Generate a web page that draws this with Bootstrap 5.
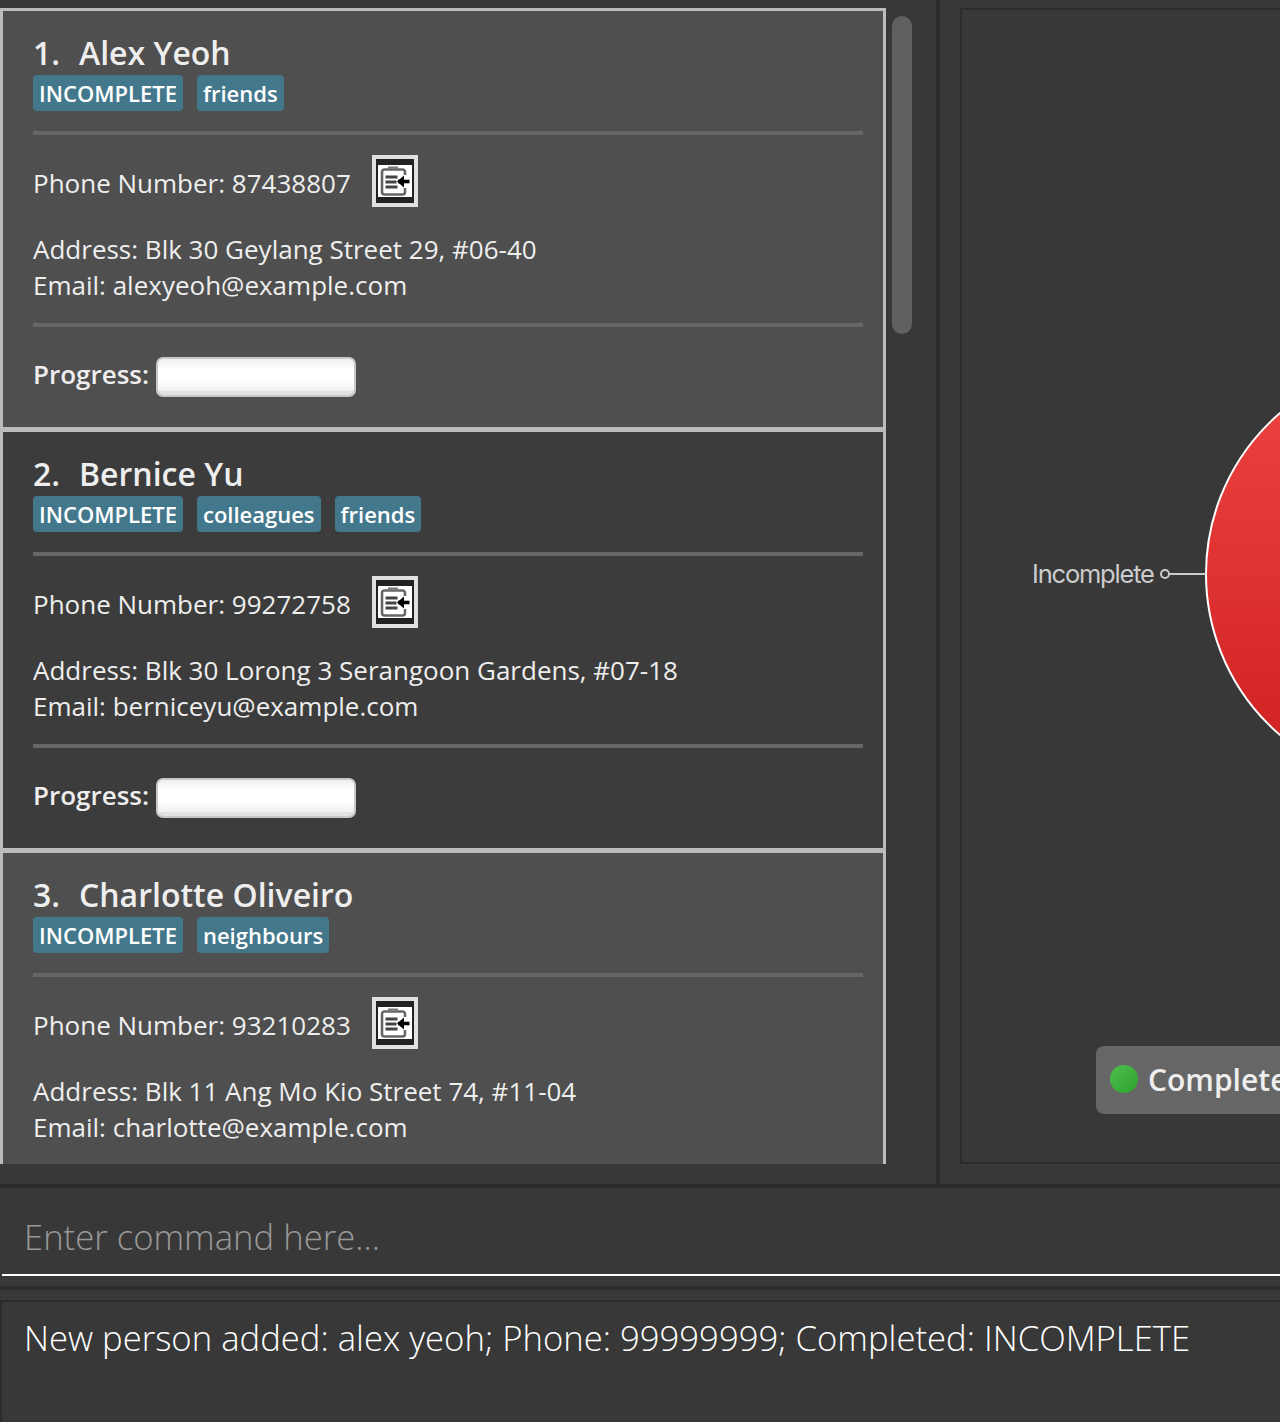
<!DOCTYPE html>
<html lang="en">
<head>
<meta charset="utf-8">
<title>Address book</title>
<link href="https://cdn.jsdelivr.net/npm/bootstrap@5.3.0/dist/css/bootstrap.min.css" rel="stylesheet">
<style>
html,body{margin:0;height:1422px;overflow:hidden;background:#383838;font-family:"Open Sans","Liberation Sans",sans-serif;}
.app-root{width:1280px;height:1422px;overflow:hidden;}
.top-row{height:1184px;flex:none;}
.left-pane{width:936px;height:1184px;padding-top:8px;}
.person-list{width:886px;height:1156px;overflow:hidden;}
.person-card{height:421px;border-style:solid;border-color:#bcbcbc;border-width:3px 3px 2px 3px;border-radius:0;padding:22px 20px 0 30px;color:#eee;font-size:26px;line-height:36px;}
.person-odd{background:#4f4f4f;}
.person-even{background:#3c3c3c;}
.person-name{font-size:32px;font-weight:600;line-height:40px;margin:0;color:#eee;}
.person-idx{display:inline-block;width:46px;}
.tag-row{gap:14px;margin-top:2px;}
.tag-chip{background:#43788c;color:#fff;height:36px;line-height:36px;font-size:22px;font-weight:600;padding:0 6px;border-radius:4px;}
.rule-line{height:4px;background:#666;margin:20px 0 0 0;}
.phone-row{margin-top:20px;height:52px;}
.phone-row span{margin-top:3px;}
.copy-btn{width:46px;height:52px;border:4px solid #e0e0e0;background:#222;margin-left:21px;padding:2px;}
.copy-btn svg{display:block;width:34px;height:32px;background:#fff;margin-top:4px;}
.addr-block{margin-top:24px;}
.rule-two{margin-top:20px;}
.progress-row{margin-top:30px;height:40px;font-weight:600;}
.progress-row span{margin-top:-6px;}
.empty-bar{width:200px;height:40px;margin-left:7px;border:2px solid #c8c8c8;border-radius:7px;background:linear-gradient(#f0f0f0,#fff 30%,#fff 60%,#f0f0f0 88%,#e2e2e2 90%);}
.scroll-track{width:20px;margin-left:6px;padding-top:8px;}
.scroll-thumb{width:20px;height:318px;background:#606060;border-radius:10px;}
.v-split{width:4px;background:#2c2c2c;}
.right-pane{flex:1;padding:8px 0 20px 20px;min-width:0;}
.chart-box{position:relative;height:1156px;width:500px;border:2px solid #2c2c2c;}
.pie-svg{position:absolute;left:-2px;top:-2px;width:500px;height:1156px;}
.pie-label{font-family:Inter,"Liberation Sans",sans-serif;font-size:25.500px;letter-spacing:-1.2px;fill:#ccc;}
.legend-chip{position:absolute;left:134px;top:1036px;width:300px;height:68px;background:#666;border-radius:8px;padding:0 0 2px 14px;gap:10px;color:#eee;font-size:30px;font-weight:600;}
.legend-dot{width:28px;height:28px;border-radius:50%;background:linear-gradient(135deg,#4fc04f,#2ea02e);}
.h-split{height:4px;background:#2c2c2c;flex:none;}
.cmd-pane{height:98px;padding:0 0 10px 2px;flex:none;}
.cmd-field{height:88px;border-bottom:2px solid #fff;padding:24px 0 0 22px;font-size:34.67px;font-weight:300;line-height:50px;color:#999;white-space:nowrap;}
.result-pane{height:132px;padding-top:10px;flex:none;}
.result-box{height:122px;border-top:2px solid #2c2c2c;border-left:2px solid #2c2c2c;padding:11px 0 0 22px;font-size:34.67px;font-weight:300;line-height:50px;color:#fff;white-space:nowrap;}
</style>
</head>
<body>
<svg width="0" height="0" class="position-absolute">
  <defs>
    <symbol id="copy-icon" viewBox="0 0 34 32">
      <g fill="none" filter="blur(.6px)">
        <path d="M27 10V7a2.500 2.500 0 0 0-2.500-2.500h-18A2.500 2.500 0 0 0 4 7v20a2.500 2.500 0 0 0 2.500 2.500h18A2.500 2.500 0 0 0 27 27v-4" stroke="#666" stroke-width="2.600"/>
        <path d="M11 4.500V2.500h8v2" stroke="#777" stroke-width="2"/>
        <path d="M7.500 12h12M7.500 17h11M7.500 22h12" stroke="#444" stroke-width="2.800"/>
        <path d="M20 16.500h11.500" stroke="#000" stroke-width="3.600"/>
        <path d="M19 16.500l7-6v12z" fill="#000"/>
      </g>
    </symbol>
  </defs>
</svg>
<div class="app-root d-flex flex-column">
  <div class="top-row d-flex">
    <div class="left-pane d-flex">
      <div class="person-list">
        <div class="card person-card person-odd">
          <h5 class="person-name"><span class="person-idx">1.</span>Alex Yeoh</h5>
          <div class="d-flex tag-row"><span class="tag-chip">INCOMPLETE</span><span class="tag-chip">friends</span></div>
          <div class="rule-line"></div>
          <div class="phone-row d-flex align-items-center"><span>Phone Number: 87438807</span><div class="copy-btn"><svg><use href="#copy-icon"/></svg></div></div>
          <div class="addr-block">Address: Blk 30 Geylang Street 29, #06-40<br>Email: alexyeoh@example.com</div>
          <div class="rule-line rule-two"></div>
          <div class="progress-row d-flex align-items-center"><span>Progress:</span><div class="empty-bar"></div></div>
        </div>
        <div class="card person-card person-even">
          <h5 class="person-name"><span class="person-idx">2.</span>Bernice Yu</h5>
          <div class="d-flex tag-row"><span class="tag-chip">INCOMPLETE</span><span class="tag-chip">colleagues</span><span class="tag-chip">friends</span></div>
          <div class="rule-line"></div>
          <div class="phone-row d-flex align-items-center"><span>Phone Number: 99272758</span><div class="copy-btn"><svg><use href="#copy-icon"/></svg></div></div>
          <div class="addr-block">Address: Blk 30 Lorong 3 Serangoon Gardens, #07-18<br>Email: berniceyu@example.com</div>
          <div class="rule-line rule-two"></div>
          <div class="progress-row d-flex align-items-center"><span>Progress:</span><div class="empty-bar"></div></div>
        </div>
        <div class="card person-card person-odd">
          <h5 class="person-name"><span class="person-idx">3.</span>Charlotte Oliveiro</h5>
          <div class="d-flex tag-row"><span class="tag-chip">INCOMPLETE</span><span class="tag-chip">neighbours</span></div>
          <div class="rule-line"></div>
          <div class="phone-row d-flex align-items-center"><span>Phone Number: 93210283</span><div class="copy-btn"><svg><use href="#copy-icon"/></svg></div></div>
          <div class="addr-block">Address: Blk 11 Ang Mo Kio Street 74, #11-04<br>Email: charlotte@example.com</div>
        </div>
      </div>
      <div class="scroll-track"><div class="scroll-thumb"></div></div>
    </div>
    <div class="v-split"></div>
    <div class="right-pane">
      <div class="chart-box">
        <svg class="pie-svg" viewBox="960 8 500 1156">
          <defs><linearGradient id="red-fill" x1="0" y1="0" x2="0" y2="1"><stop offset="0" stop-color="#ee4444"/><stop offset="1" stop-color="#cf1f1f"/></linearGradient></defs>
          <circle cx="1418" cy="574" r="212" fill="url(#red-fill)" stroke="#fff" stroke-width="2"/>
          <path d="M1169 574h37" stroke="#ccc" stroke-width="2"/>
          <circle cx="1165" cy="574" r="4" fill="none" stroke="#ccc" stroke-width="2"/>
          <text class="pie-label" x="1032" y="583">Incomplete</text>
        </svg>
        <div class="legend-chip d-flex align-items-center"><span class="legend-dot"></span><span>Complete</span></div>
      </div>
    </div>
  </div>
  <div class="h-split"></div>
  <div class="cmd-pane"><div class="cmd-field">Enter command here...</div></div>
  <div class="h-split"></div>
  <div class="result-pane"><div class="result-box">New person added: alex yeoh; Phone: 99999999; Completed: INCOMPLETE</div></div>
</div>
<script src="https://cdn.jsdelivr.net/npm/bootstrap@5.3.0/dist/js/bootstrap.bundle.min.js"></script>
</body>
</html>
